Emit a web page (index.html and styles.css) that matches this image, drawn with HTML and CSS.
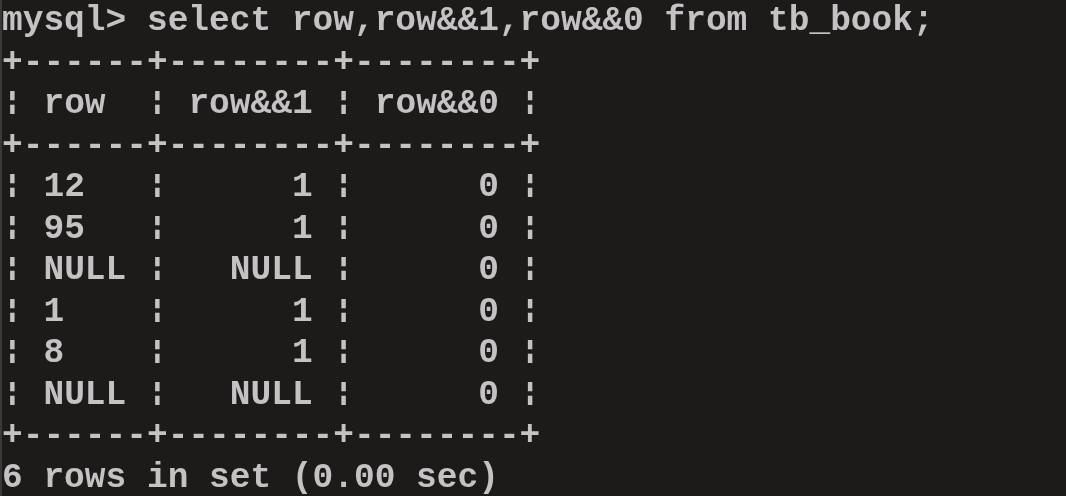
FILE: index.html
```html
<!DOCTYPE html>
<html>
<head>
<meta charset="utf-8">
<link rel="stylesheet" href="styles.css">
</head>
<body>
<div class="console">
<pre class="out">mysql&gt; select row,row&amp;&amp;1,row&amp;&amp;0 from tb_book;
+------+--------+--------+
<span class="b">¦</span> row  <span class="b">¦</span> row&amp;&amp;1 <span class="b">¦</span> row&amp;&amp;0 <span class="b">¦</span>
+------+--------+--------+
<span class="b">¦</span> 12   <span class="b">¦</span>      1 <span class="b">¦</span>      0 <span class="b">¦</span>
<span class="b">¦</span> 95   <span class="b">¦</span>      1 <span class="b">¦</span>      0 <span class="b">¦</span>
<span class="b">¦</span> NULL <span class="b">¦</span>   NULL <span class="b">¦</span>      0 <span class="b">¦</span>
<span class="b">¦</span> 1    <span class="b">¦</span>      1 <span class="b">¦</span>      0 <span class="b">¦</span>
<span class="b">¦</span> 8    <span class="b">¦</span>      1 <span class="b">¦</span>      0 <span class="b">¦</span>
<span class="b">¦</span> NULL <span class="b">¦</span>   NULL <span class="b">¦</span>      0 <span class="b">¦</span>
+------+--------+--------+
6 rows in set (0.00 sec)</pre>
</div>
</body>
</html>
```
FILE: styles.css
```css
html, body {
  margin: 0;
  padding: 0;
  background: #1d1a1a;
}
.console {
  width: 1066px;
  height: 496px;
  overflow: hidden;
  background: #1d1a1a;
  border-left: 2px solid #3a3838;
  box-sizing: border-box;
}
.out {
  margin: 0;
  padding: 0;
  font-family: "Liberation Mono", "DejaVu Sans Mono", monospace;
  font-weight: bold;
  font-size: 34.5px;
  line-height: 41.5px;
  color: #c4c2c2;
  white-space: pre;
  filter: blur(0.4px);
}
.b {
  display: inline-block;
  transform: scaleY(0.72) translateY(-2px);
}
```
